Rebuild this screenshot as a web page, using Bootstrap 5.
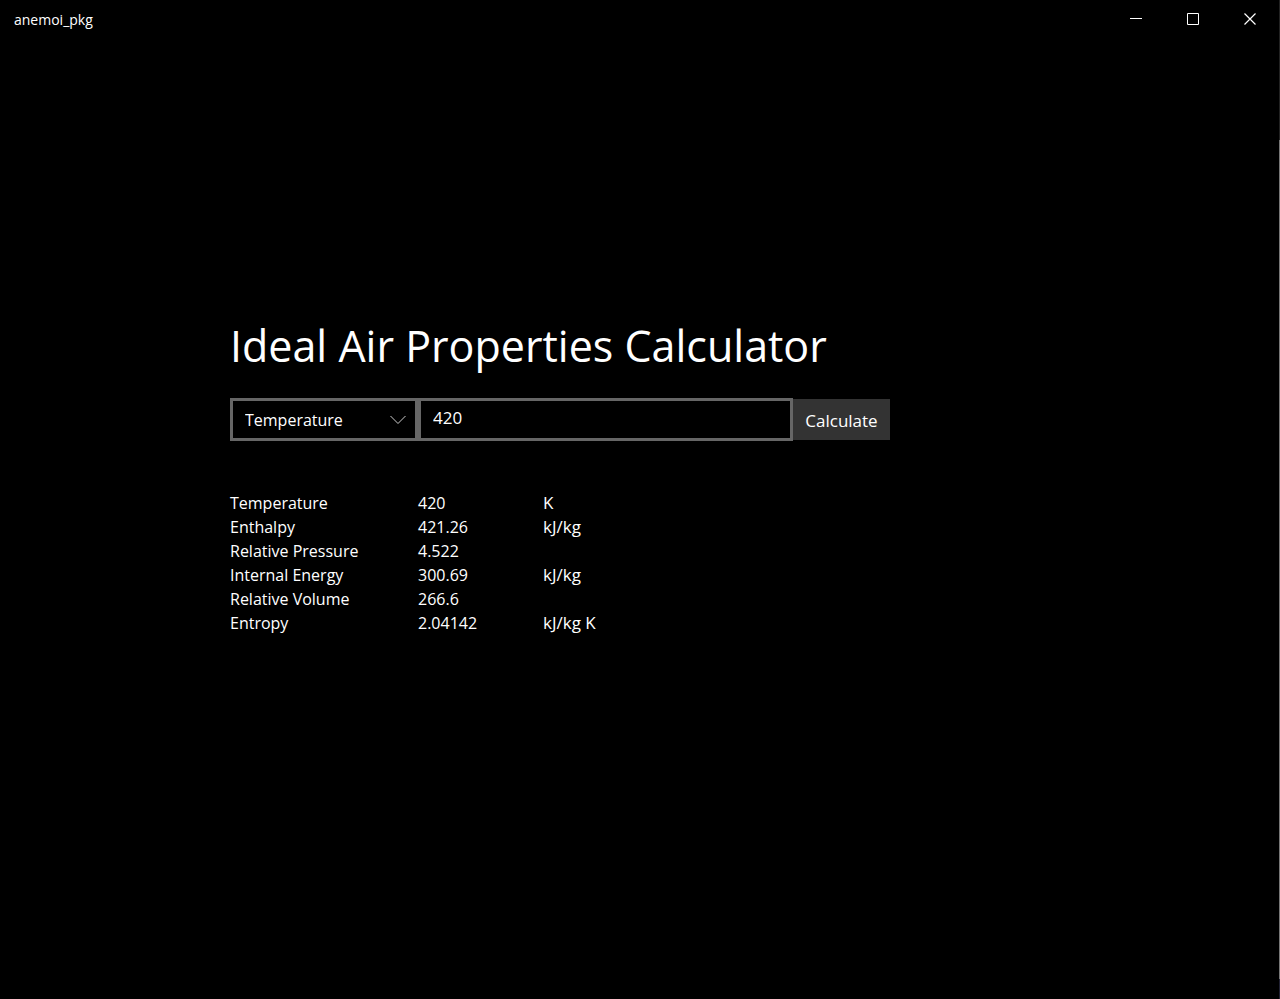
<!DOCTYPE html>
<html lang="en">
<head>
<meta charset="utf-8">
<meta name="viewport" content="width=device-width, initial-scale=1">
<title>anemoi_pkg</title>
<link href="https://cdn.jsdelivr.net/npm/bootstrap@5.3.0/dist/css/bootstrap.min.css" rel="stylesheet">
<style>
body{background:linear-gradient(#222 0 14%,#777 14% 98%,#223 98%) right/1px 100% no-repeat #000;color:#fff;font-family:"Segoe UI","Open Sans","Noto Sans",sans-serif;font-size:16px;line-height:24px}
.title-bar{padding-right:1px}
.title-text{font-size:14px;padding:2px 0 0 14px}
.win-btn{width:57px;height:38px;color:#fff;background:transparent;border:0;padding:0}
.win-btn svg{display:block;margin:0 auto}
.content-area{padding-bottom:86px}
.calculator{width:100%;max-width:820px}
.calculator h1{font-size:43px;line-height:60px;font-weight:400;margin-bottom:22px}
.kind-wrap{width:188px}
.kind-select,.value-input{height:43px;border:3px solid #666;border-radius:0;background-color:#000;color:#fff;line-height:24px;padding:0 12px}
.kind-select{appearance:none;width:100%}
.kind-arrow{right:12px;top:17px;pointer-events:none}
.value-input{width:375px;padding-bottom:4px;font-size:17px}
.calc-btn{width:97px;height:41px;background:#333;color:#fff;border:0;padding:2px 0 0;font-size:17px}
.results{margin-top:50px}
.results th,.results td{font-weight:400;padding:0;height:24px}
.results th{width:188px}
.results .amount{width:125px}
.results .unit{font-size:17px}
</style>
</head>
<body class="d-flex flex-column min-vh-100">
<header class="title-bar d-flex align-items-center">
<span class="title-text flex-grow-1">anemoi_pkg</span>
<button type="button" class="win-btn" aria-label="Minimize"><svg width="13" height="13" fill="none" stroke="currentColor"><path d="M0 5.500h12"/></svg></button>
<button type="button" class="win-btn" aria-label="Maximize"><svg width="13" height="13" fill="none" stroke="currentColor"><path d="M.5.5h11v11H.5z"/></svg></button>
<button type="button" class="win-btn" aria-label="Close"><svg width="13" height="13" fill="none" stroke="currentColor" stroke-width="1.200"><path d="M.5.5l11 11m0-11l-11 11"/></svg></button>
</header>
<main class="content-area flex-grow-1 d-flex align-items-center justify-content-center">
<div class="calculator">
<h1>Ideal Air Properties Calculator</h1>
<form class="d-flex align-items-center">
<div class="kind-wrap position-relative">
<select class="kind-select d-block" aria-label="Property"><option>Temperature</option><option>Enthalpy</option><option>Relative Pressure</option><option>Internal Energy</option><option>Relative Volume</option><option>Entropy</option></select>
<svg class="kind-arrow position-absolute" width="16" height="10" fill="none" stroke="#ccc"><path d="M.5 1L8 8.500 15.500 1"/></svg>
</div>
<input class="value-input" type="text" value="420" aria-label="Value">
<button type="button" class="calc-btn">Calculate</button>
</form>
<table class="results">
<tbody>
<tr><th scope="row">Temperature</th><td class="amount">420</td><td class="unit">K</td></tr>
<tr><th scope="row">Enthalpy</th><td class="amount">421.26</td><td class="unit">kJ/kg</td></tr>
<tr><th scope="row">Relative Pressure</th><td class="amount">4.522</td><td class="unit"></td></tr>
<tr><th scope="row">Internal Energy</th><td class="amount">300.69</td><td class="unit">kJ/kg</td></tr>
<tr><th scope="row">Relative Volume</th><td class="amount">266.6</td><td class="unit"></td></tr>
<tr><th scope="row">Entropy</th><td class="amount">2.04142</td><td class="unit">kJ/kg K</td></tr>
</tbody>
</table>
</div>
</main>
<script src="https://cdn.jsdelivr.net/npm/bootstrap@5.3.0/dist/js/bootstrap.bundle.min.js"></script>
</body>
</html>
